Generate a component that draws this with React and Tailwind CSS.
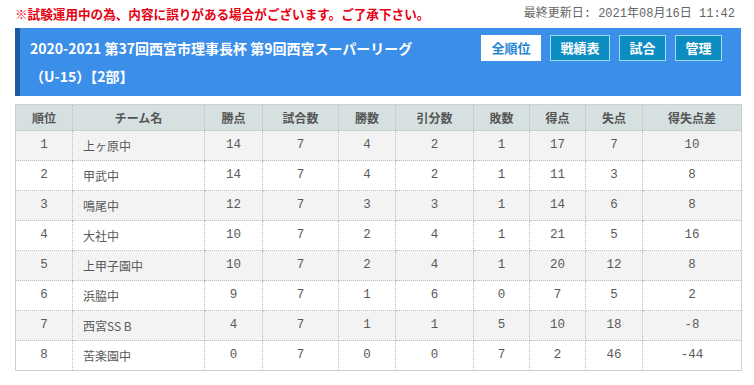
import React from "react";

const rows = [
  [1, "上ヶ原中", 14, 7, 4, 2, 1, 17, 7, 10],
  [2, "甲武中", 14, 7, 4, 2, 1, 11, 3, 8],
  [3, "鳴尾中", 12, 7, 3, 3, 1, 14, 6, 8],
  [4, "大社中", 10, 7, 2, 4, 1, 21, 5, 16],
  [5, "上甲子園中", 10, 7, 2, 4, 1, 20, 12, 8],
  [6, "浜脇中", 9, 7, 1, 6, 0, 7, 5, 2],
  [7, "西宮SS B", 4, 7, 1, 1, 5, 10, 18, -8],
  [8, "苦楽園中", 0, 7, 0, 0, 7, 2, 46, -44],
];

const heads = ["順位", "チーム名", "勝点", "試合数", "勝数", "引分数", "敗数", "得点", "失点", "得失点差"];
const widths = [57, 132, 58, 76, 57, 78, 56, 56, 57, 99];

const jp = { fontFamily: '"Noto Sans CJK JP", sans-serif' };
const mono = { fontFamily: '"Liberation Mono", "Noto Sans CJK JP", monospace' };

export default function App() {
  return (
    <div className="w-[754px] h-[385px] bg-white pl-[15px] pr-[13px] overflow-hidden" style={jp}>
      <div className="flex items-center justify-between h-[28px]">
        <p className="text-[12.6px] font-bold text-[#e60012] leading-none">
          ※試験運用中の為、内容に誤りがある場合がございます。ご了承下さい。
        </p>
        <p className="text-[12px] text-[#666] leading-none pr-[6px]" style={mono}>
          最終更新日: 2021年08月16日 11:42
        </p>
      </div>

      <div className="flex justify-between h-[68px] bg-[#3b8fe9] border-l-[5px] border-[#1b5ba3]">
        <h1 className="pl-[10px] pt-[6px] text-[14px] font-bold text-white leading-[28px]">
          2020-2021 第37回西宮市理事長杯 第9回西宮スーパーリーグ
          <br />
          （U-15）【2部】
        </h1>
        <div className="flex gap-[9px] mt-[7px] pr-[19px] self-start">
          <button className="w-[60px] h-[26px] bg-white text-[#1f86d6] text-[13px] font-bold">全順位</button>
          <button className="w-[60px] h-[26px] bg-[#0d8cc2] border border-[#9fdcf2] text-white text-[13px] font-bold">戦績表</button>
          <button className="w-[47px] h-[26px] bg-[#0d8cc2] border border-[#9fdcf2] text-white text-[13px] font-bold">試合</button>
          <button className="w-[47px] h-[26px] bg-[#0d8cc2] border border-[#9fdcf2] text-white text-[13px] font-bold">管理</button>
        </div>
      </div>

      <table className="mt-[8px] w-[726px] border-collapse border border-[#cfcfcf] table-fixed text-[#5a5a5a]">
        <colgroup>
          {widths.map((w, i) => (
            <col key={i} style={{ width: w }} />
          ))}
        </colgroup>
        <thead>
          <tr className="h-[26px] bg-[#d6e0e0]">
            {heads.map((h) => (
              <th key={h} className="text-[12px] font-bold border border-dotted border-[#bdbdbd] text-center text-[#555]">
                {h}
              </th>
            ))}
          </tr>
        </thead>
        <tbody>
          {rows.map((r, i) => (
            <tr key={r[0]} className={`h-[30px] ${i % 2 === 0 ? "bg-[#f3f3f3]" : "bg-white"}`}>
              {r.map((c, j) =>
                j === 1 ? (
                  <td key={j} className="text-[12px] text-left pl-[10px] border border-dotted border-[#bdbdbd]" style={jp}>
                    {c}
                  </td>
                ) : (
                  <td key={j} className="text-[12.5px] text-center border border-dotted border-[#bdbdbd]" style={mono}>
                    {c}
                  </td>
                )
              )}
            </tr>
          ))}
        </tbody>
      </table>
    </div>
  );
}
